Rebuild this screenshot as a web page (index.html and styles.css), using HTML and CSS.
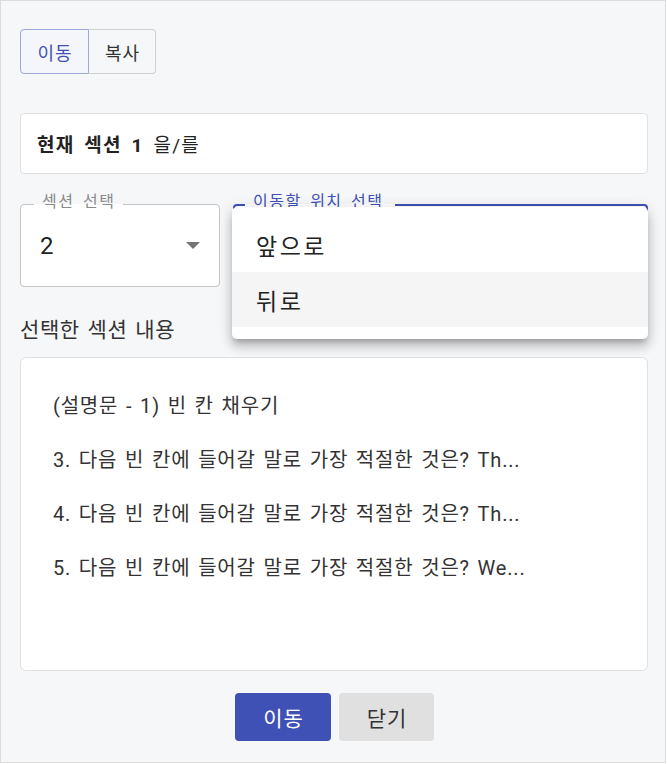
FILE: index.html
```html
<!DOCTYPE html>
<html lang="ko">
<head>
<meta charset="utf-8">
<title>섹션 이동</title>
<link rel="stylesheet" href="styles.css">
</head>
<body>
<div class="dialog">
  <div class="toggle-group">
    <button class="toggle selected">이동</button>
    <button class="toggle">복사</button>
  </div>

  <div class="current">
    <span class="current-text"><strong>현재 섹션 1</strong> 을/를</span>
  </div>

  <div class="select-row">
    <div class="select">
      <span class="select-label">섹션 선택</span>
      <span class="select-value">2</span>
      <span class="arrow"></span>
    </div>
    <div class="select focused">
      <span class="select-label">이동할 위치 선택</span>
      <div class="menu">
        <div class="menu-item">앞으로</div>
        <div class="menu-item hover">뒤로</div>
      </div>
    </div>
  </div>

  <div class="content-label">선택한 섹션 내용</div>
  <div class="content">
    <p>(설명문 - 1) 빈 칸 채우기</p>
    <p>3. 다음 빈 칸에 들어갈 말로 가장 적절한 것은? Th...</p>
    <p>4. 다음 빈 칸에 들어갈 말로 가장 적절한 것은? Th...</p>
    <p>5. 다음 빈 칸에 들어갈 말로 가장 적절한 것은? We...</p>
  </div>

  <div class="actions">
    <button class="btn primary">이동</button>
    <button class="btn secondary">닫기</button>
  </div>
</div>
</body>
</html>
```

FILE: styles.css
```css
* { box-sizing: border-box; }
html, body { margin: 0; padding: 0; background: #ffffff; }
body {
  font-family: Roboto, "Noto Sans CJK KR", sans-serif;
  color: #212121;
}
.dialog {
  width: 666px;
  height: 763px;
  border: 1px solid #dcdcdc;
  background: #f6f7f9;
  padding: 28px 17px 20px 19px;
  display: flex;
  flex-direction: column;
}
.toggle-group {
  display: flex;
  height: 45px;
  align-self: flex-start;
}
.toggle {
  font-family: inherit;
  font-size: 18px;
  letter-spacing: 1px;
  height: 45px;
  padding: 0 0 0 1px;
  background: #f6f7f9;
  border: 1px solid #d0d0d0;
  color: #333;
  cursor: pointer;
}
.toggle:first-child {
  width: 69px;
  border-radius: 4px 0 0 4px;
}
.toggle:last-child {
  width: 67px;
  border-left: none;
  border-radius: 0 4px 4px 0;
}
.toggle.selected {
  border-color: #9fa8da;
  color: #3f51b5;
  background: #f5f6fb;
}
.current {
  margin-top: 39px;
  height: 61px;
  background: #fff;
  border: 1px solid #e0e0e0;
  border-radius: 4px;
  padding: 0 16px;
  display: flex;
  align-items: center;
}
.current-text {
  font-size: 19px;
  letter-spacing: 1.2px;
  word-spacing: 4px;
  color: #222;
}
.current-text strong { font-weight: 700; }
.select-row {
  margin-top: 30px;
  display: flex;
  gap: 13px;
  height: 83px;
}
.select {
  position: relative;
  width: 200px;
  height: 83px;
  background: #fff;
  border: 1px solid #c4c4c4;
  border-radius: 4px;
  display: flex;
  align-items: center;
  padding: 0 19px;
}
.select.focused {
  width: 415px;
  border: 2px solid #3f51b5;
}
.select-label {
  position: absolute;
  top: -13px;
  left: 13px;
  padding: 0 8px;
  font-size: 16px;
  letter-spacing: 1.5px;
  word-spacing: 3px;
  line-height: 20px;
  color: #8a8a8a;
  background: linear-gradient(to bottom, #f6f7f9 60%, #ffffff 60%);
}
.select.focused .select-label {
  top: -14px;
  left: 10px;
  padding: 0 12px 0 8px;
  color: #3f51b5;
}
.select-value {
  font-size: 24px;
  color: #222;
}
.arrow {
  position: absolute;
  right: 19px;
  top: 37px;
  width: 0;
  height: 0;
  border-left: 7px solid transparent;
  border-right: 7px solid transparent;
  border-top: 7px solid #757575;
}
.menu {
  position: absolute;
  top: 1px;
  left: -3px;
  right: -2px;
  background: #fff;
  border-radius: 5px;
  padding: 10px 0 12px;
  box-shadow: 0 5px 5px -3px rgba(0,0,0,0.2), 0 8px 10px 1px rgba(0,0,0,0.14), 0 3px 14px 2px rgba(0,0,0,0.12);
  z-index: 2;
}
.menu-item {
  height: 55px;
  display: flex;
  align-items: center;
  padding: 0 24px;
  font-size: 23px;
  letter-spacing: 2.5px;
  color: #222;
}
.menu-item.hover { background: #f5f5f5; }
.content-label {
  margin-top: 28px;
  line-height: 30px;
  font-size: 21px;
  letter-spacing: 0.6px;
  word-spacing: 2px;
  color: #333;
}
.content {
  margin-top: 12px;
  height: 314px;
  background: #fff;
  border: 1px solid #e0e0e0;
  border-radius: 6px;
  padding: 33px 32px 0;
}
.content p {
  margin: 0 0 24px;
  line-height: 30px;
  font-size: 20px;
  letter-spacing: 0.8px;
  word-spacing: 2px;
  color: #333;
  white-space: nowrap;
}
.actions {
  margin-top: 22px;
  display: flex;
  justify-content: center;
  gap: 8px;
  padding-left: 1px;
}
.btn {
  font-family: inherit;
  font-size: 21px;
  letter-spacing: 1px;
  height: 48px;
  padding: 0 0 0 1px;
  border: none;
  border-radius: 4px;
  cursor: pointer;
}
.btn.primary {
  width: 96px;
  background: #3f51b5;
  color: #fff;
}
.btn.secondary {
  width: 95px;
  background: #e0e0e0;
  color: #333;
}
```
